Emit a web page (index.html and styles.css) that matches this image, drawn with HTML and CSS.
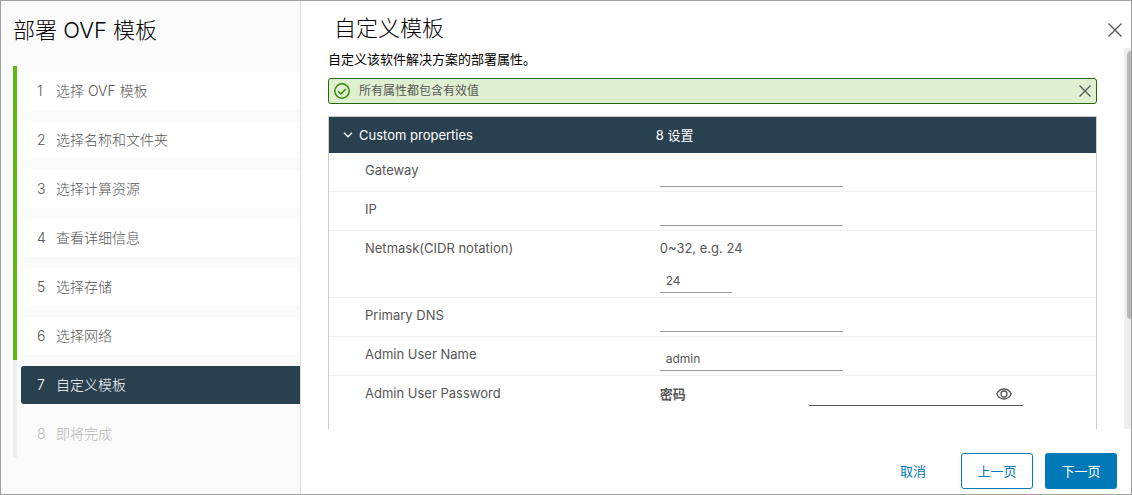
FILE: index.html
```html
<!DOCTYPE html>
<html lang="zh-CN">
<head>
<meta charset="utf-8">
<title>部署 OVF 模板</title>
<link rel="stylesheet" href="styles.css">
</head>
<body>
<div class="wizard">
  <aside class="sidebar">
    <h1 class="wizard-title">部署 OVF 模板</h1>
    <ol class="steps">
      <li class="step done"><button class="step-card" type="button"><span class="num">1</span>选择 OVF 模板</button></li>
      <li class="step done"><button class="step-card" type="button"><span class="num">2</span>选择名称和文件夹</button></li>
      <li class="step done"><button class="step-card" type="button"><span class="num">3</span>选择计算资源</button></li>
      <li class="step done"><button class="step-card" type="button"><span class="num">4</span>查看详细信息</button></li>
      <li class="step done"><button class="step-card" type="button"><span class="num">5</span>选择存储</button></li>
      <li class="step done"><button class="step-card" type="button"><span class="num">6</span>选择网络</button></li>
      <li class="step current"><button class="step-card" type="button" aria-current="step"><span class="num">7</span>自定义模板</button></li>
      <li class="step"><button class="step-card" type="button" disabled><span class="num">8</span>即将完成</button></li>
    </ol>
  </aside>
  <main class="main">
    <header class="page-header">
      <h2 class="page-title">自定义模板</h2>
      <button class="icon-button" type="button" aria-label="关闭">
        <svg width="14" height="14" viewBox="0 0 14 14"><path d="M.5.5l13 13M13.5.5l-13 13"/></svg>
      </button>
    </header>
    <div class="body">
      <div class="content">
        <p class="description">自定义该软件解决方案的部署属性。</p>
        <div class="alert" role="status">
          <svg class="alert-icon" width="16" height="16" viewBox="0 0 16 16"><circle cx="8" cy="8" r="7.2"/><path d="M4.200 8.200l2.700 2.700 5-5"/></svg>
          <span class="alert-text">所有属性都包含有效值</span>
          <button class="icon-button" type="button" aria-label="关闭提示">
            <svg width="12" height="12" viewBox="0 0 12 12"><path d="M.5.5l11 11M11.500.5l-11 11"/></svg>
          </button>
        </div>
        <div class="panel">
          <table class="properties">
            <thead>
              <tr>
                <th class="name-col" scope="col"><button class="toggle" type="button" aria-expanded="true"><svg width="10" height="6" viewBox="0 0 10 6"><path d="M1 .8l4 4 4-4"/></svg>Custom properties</button></th>
                <th class="value-col" scope="col">8 设置</th>
              </tr>
            </thead>
            <tbody>
              <tr><td><label for="gateway">Gateway</label></td><td><input class="field" id="gateway" type="text"></td></tr>
              <tr><td><label for="ip">IP</label></td><td><input class="field" id="ip" type="text"></td></tr>
              <tr><td><label for="netmask">Netmask(CIDR notation)</label></td><td><p class="hint">0~32, e.g. 24</p><input class="field short" id="netmask" type="text" value="24"></td></tr>
              <tr><td><label for="dns">Primary DNS</label></td><td><input class="field" id="dns" type="text"></td></tr>
              <tr><td><label for="user">Admin User Name</label></td><td><input class="field" id="user" type="text" value="admin"></td></tr>
              <tr class="last">
                <td>Admin User Password</td>
                <td>
                  <div class="password-row">
                    <label class="password-label" for="password">密码</label>
                    <div class="password-box">
                      <input class="password-input" id="password" type="password">
                      <button class="icon-button" type="button" aria-label="显示密码">
                        <svg width="16" height="12" viewBox="0 0 16 12"><path d="M.7 6C2.300 3 4.800 1 8 1s5.700 2 7.300 5C13.700 9 11.200 11 8 11S2.300 9 .7 6z"/><circle cx="8" cy="6" r="3"/></svg>
                      </button>
                    </div>
                  </div>
                </td>
              </tr>
            </tbody>
          </table>
        </div>
      </div>
      <div class="scroll-track"><div class="scroll-thumb"></div></div>
    </div>
    <footer class="footer">
      <button class="button link" type="button">取消</button>
      <button class="button outline" type="button">上一页</button>
      <button class="button primary" type="button">下一页</button>
    </footer>
  </main>
</div>
</body>
</html>
```
FILE: styles.css
```css
* { box-sizing: border-box; }

body {
  margin: 0;
  color: #565656;
  background: #fff;
  font: 13px/16px Inter, "Noto Sans CJK SC", sans-serif;
}

button, input { font: inherit; color: inherit; }
button { padding: 0; border: 0; background: none; }
svg { display: block; fill: none; stroke: currentColor; }
h1, h2, p, ol { margin: 0; padding: 0; }

.wizard {
  display: flex;
  height: 100vh;
  border: 1px solid #a0a0a0;
}

.sidebar {
  flex: none;
  width: 300px;
  padding: 14px 0 0 12px;
  background: #fafafa;
  border-right: 1px solid #ddd;
}

.wizard-title, .page-title {
  color: #000;
  font-size: 22px;
  font-weight: 300;
  line-height: 30px;
}

.steps { margin-top: 21px; list-style: none; }

.step {
  padding: 6px 0 5px 4px;
  border-left: 4px solid #eee;
}
.step.done { border-color: #60b515; }

.step-card {
  display: flex;
  align-items: center;
  width: 100%;
  height: 38px;
  padding-left: 16px;
  border-radius: 3px;
  font-size: 14px;
  font-weight: 300;
  text-align: left;
}
.done .step-card { background: #fff; }
.current .step-card {
  color: #fff;
  background: #29404e;
  border-radius: 3px 0 0 3px;
}
.step-card:disabled { color: #b5b5b5; }
.num { width: 19px; }

.main {
  display: flex;
  flex: 1;
  flex-direction: column;
  min-width: 0;
}

.page-header {
  display: flex;
  align-items: center;
  justify-content: space-between;
  height: 47px;
  padding: 11px 9px 0 33px;
}
.page-header .page-title { margin-bottom: 4px; }
.icon-button svg { stroke-width: 1.3; }

.body {
  display: flex;
  flex: 1;
  min-height: 0;
}

.content {
  display: flex;
  flex: 1;
  flex-direction: column;
  min-width: 0;
  padding: 3px 27px 0;
}

.description { color: #000; }

.alert {
  display: flex;
  flex: none;
  align-items: center;
  height: 26px;
  margin: 11px 0 12px;
  padding: 0 5px;
  border: 1px solid #266900;
  border-radius: 3px;
  background: #dff0d0;
}
.alert-icon { color: #318700; stroke-width: 1.4; }
.alert-text { flex: 1; margin-left: 9px; font-size: 12px; }

.panel {
  flex: 1;
  min-height: 0;
  overflow: hidden;
  border: 1px solid #ccc;
  border-bottom: 0;
}

.properties {
  width: 100%;
  table-layout: fixed;
  border-spacing: 0;
}
.properties th {
  height: 36px;
  padding: 0;
  color: #fff;
  background: #29404e;
  font-weight: 400;
  text-align: left;
}
.name-col { width: 42.6%; }
.toggle { display: flex; align-items: center; gap: 6px; padding-left: 14px; }
.toggle svg { stroke-width: 1.4; }

.properties td {
  padding: 10px 0 4px 4px;
  border-bottom: 1px solid #eee;
  line-height: 14px;
  vertical-align: top;
}
.properties td:first-child { padding-left: 36px; }
.properties .last td { border-bottom: 0; }

.field {
  display: block;
  width: 183px;
  height: 24px;
  padding: 0 6px;
  border: 0;
  border-bottom: 1px solid #999;
  background: none;
  font-size: 12px;
}
.field.short { width: 72px; }
.hint { margin-bottom: 14px; }

.properties .last td:last-child { padding-top: 6px; }
.password-row { display: flex; align-items: center; }
.password-label { width: 149px; font-weight: 700; }
.password-box {
  display: flex;
  align-items: center;
  width: 214px;
  height: 24px;
  padding-right: 11px;
  border-bottom: 1px solid #565656;
}
.password-input {
  flex: 1;
  min-width: 0;
  padding: 0 6px;
  border: 0;
  background: none;
}

.scroll-track {
  flex: none;
  width: 7px;
  padding: 3px 0 0 3px;
  background: #eee;
}
.scroll-thumb {
  height: 71%;
  border-radius: 4px 0 0 4px;
  background: #b8b8b8;
}

.footer {
  display: flex;
  justify-content: flex-end;
  gap: 12px;
  padding: 24px 14px 5px;
}
.button {
  min-width: 72px;
  height: 36px;
  border: 1px solid transparent;
  border-radius: 3px;
  color: #0079b8;
}
.button.outline { border-color: #0079b8; }
.button.primary { color: #fff; background: #0079b8; }
```
